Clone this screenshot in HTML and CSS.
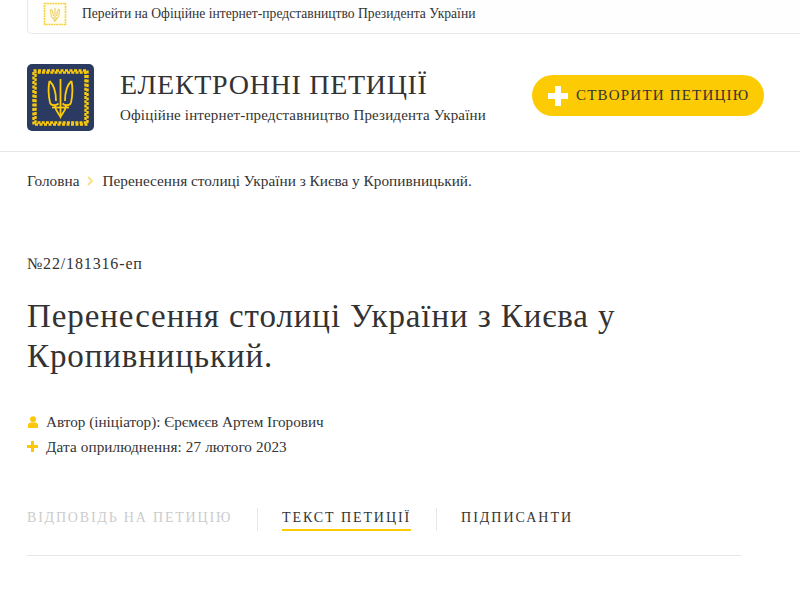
FILE: index.html
```html
<!DOCTYPE html>
<html lang="uk">
<head>
    <meta charset="UTF-8">
    <meta name="viewport" content="width=device-width, initial-scale=1.0">
    <title>Електронні петиції</title>
    <link rel="stylesheet" href="styles.css">
</head>
<body>
<div class="topbar">
    <svg class="topbar-logo" width="24" height="24" viewBox="0 0 24 24">
        <rect x="1.500" y="1.500" width="21" height="21" fill="#fffdf2" stroke="#f5d443" stroke-width="1.6" stroke-dasharray="2 0.6"/>
        <g fill="none" stroke="#ecca55" stroke-width="1">
            <path d="M12 6v13"/>
            <path d="M8 7c-.5 2.500 0 6 .5 8 .5 1.200 2 1 2.700.4"/>
            <path d="M16 7c.5 2.500 0 6-.5 8-.5 1.200-2 1-2.700.4"/>
            <path d="M8 7c1.500 1.500 2.300 4 2.300 7"/>
            <path d="M16 7c-1.500 1.500-2.300 4-2.300 7"/>
            <path d="M10 16c.2 1.500 1.300 2.300 2 3.500.7-1.200 1.800-2 2-3.500"/>
        </g>
    </svg>
    <a class="topbar-link">Перейти на Офіційне інтернет-представництво Президента України</a>
</div>

<header class="header">
    <svg class="logo" width="67" height="67" viewBox="0 0 67 67">
        <rect width="67" height="67" rx="5" fill="#2a3a61"/>
        <g fill="none" stroke="#fdcb0a" stroke-width="2.400">
            <rect x="6.500" y="6.500" width="54" height="54" stroke-dasharray="3 1.500"/>
            <rect x="8.500" y="8.500" width="50" height="50" stroke-dasharray="3 1.200" stroke-dashoffset="2"/>
        </g>
        <g fill="none" stroke="#fdcb0a" stroke-width="1.800">
            <path d="M33.500 15v37"/>
            <path d="M22.500 17c-1.500 7-.5 17 .5 21.500 1 3.500 6 3.500 8.500 1"/>
            <path d="M44.500 17c1.500 7 .5 17-.5 21.500-1 3.500-6 3.500-8.500 1"/>
            <path d="M22.500 17c4.500 4 6.500 11 6.500 20"/>
            <path d="M44.500 17c-4.500 4-6.500 11-6.500 20"/>
            <path d="M28 42c.5 5 4 7.500 5.500 11 1.500-3.500 5-6 5.500-11"/>
            <path d="M25 43.500h17"/>
        </g>
    </svg>
    <div class="header-text">
        <div class="site-title">ЕЛЕКТРОННІ ПЕТИЦІЇ</div>
        <div class="site-sub">Офіційне інтернет-представництво Президента України</div>
    </div>
    <a class="create-btn"><span class="plus plus-white"></span>СТВОРИТИ ПЕТИЦІЮ</a>
</header>

<nav class="crumbs">
    <a>Головна</a>
    <svg class="crumb-arrow" width="7" height="10" viewBox="0 0 7 10"><path d="M1 1l4 4-4 4" fill="none" stroke="#fbe08a" stroke-width="2"/></svg>
    <span>Перенесення столиці України з Києва у Кропивницький.</span>
</nav>

<main class="petition">
    <div class="number">№22/181316-еп</div>
    <h1 class="title">Перенесення столиці України з Києва у Кропивницький.</h1>
    <div class="meta">
        <div class="meta-row">
            <svg class="meta-icon" width="12" height="12" viewBox="0 0 12 12"><circle cx="6" cy="3.200" r="3" fill="#fdc70c"/><path d="M1 12V9.500Q1 6.500 4 6.500H8Q11 6.500 11 9.500V12Z" fill="#fdc70c"/></svg>
            <span>Автор (ініціатор): Єрємєєв Артем Ігорович</span>
        </div>
        <div class="meta-row">
            <span class="plus plus-small"></span>
            <span class="meta-date">Дата оприлюднення: 27 лютого 2023</span>
        </div>
    </div>
    <div class="tabs">
        <a class="tab tab-off"><span class="tab-label">ВІДПОВІДЬ НА ПЕТИЦІЮ</span></a>
        <a class="tab tab-on"><span class="tab-label">ТЕКСТ ПЕТИЦІЇ</span></a>
        <a class="tab tab-last"><span class="tab-label">ПІДПИСАНТИ</span></a>
    </div>
</main>
</body>
</html>
```

FILE: styles.css
```css
body {
    margin: 0;
    background: #fff;
    color: #333;
    font-family: "Liberation Serif", serif;
    overflow: hidden;
}
a {
    color: inherit;
    text-decoration: none;
}
.topbar {
    display: flex;
    align-items: center;
    height: 28px;
    margin-left: 27px;
    padding: 0 0 5px 15px;
    border: 1px solid #e8e8e8;
    border-width: 0 0 1px 1px;
    border-bottom-left-radius: 5px;
    background: #fefefe;
}
.topbar-link {
    margin-left: 15px;
    font-size: 13.6px;
}
.header {
    display: flex;
    align-items: flex-start;
    height: 87px;
    padding: 30px 36px 0 27px;
    border-bottom: 1px solid #e6e6e6;
}
.header-text {
    margin: 3px 0 0 26px;
    flex: 1;
}
.site-title {
    font-size: 28px;
    line-height: 36px;
    letter-spacing: 0.7px;
}
.site-sub {
    font-size: 15px;
    line-height: 24px;
    letter-spacing: 0.16px;
}
.create-btn {
    display: flex;
    align-items: center;
    width: 232px;
    height: 41px;
    margin-top: 11px;
    padding-left: 16px;
    box-sizing: border-box;
    border-radius: 21px;
    background: #fdcb04;
    font-size: 15px;
    letter-spacing: 1.2px;
}
.plus {
    display: inline-block;
    background:
        linear-gradient(currentColor, currentColor) center / 100% 30% no-repeat,
        linear-gradient(currentColor, currentColor) center / 30% 100% no-repeat;
}
.plus-white {
    width: 20px;
    height: 20px;
    margin-right: 8px;
    color: #fff;
}
.plus-small {
    width: 11px;
    height: 11px;
    color: #fdc70c;
}
.crumbs {
    display: flex;
    align-items: center;
    gap: 8px;
    padding: 20px 0 0 27px;
    font-size: 15.3px;
    line-height: 18px;
}
.petition {
    padding: 0 59px 0 27px;
}
.number {
    margin-top: 64px;
    font-size: 16px;
    line-height: 20px;
    letter-spacing: 0.85px;
}
.title {
    margin: 22px 0 0;
    font-size: 33px;
    line-height: 40px;
    font-weight: normal;
    letter-spacing: 0.9px;
}
.meta {
    margin-top: 33px;
    font-size: 15.2px;
}
.meta-row {
    display: flex;
    align-items: center;
    gap: 8px;
    height: 25px;
}
.meta-icon {
    margin-right: -1px;
}
.meta-date {
    letter-spacing: 0.12px;
}
.tabs {
    display: flex;
    align-items: flex-start;
    margin-top: 49px;
    padding-bottom: 24px;
    border-bottom: 1px solid #e6e6e6;
}
.tab {
    height: 23px;
    padding-right: 25px;
    border-right: 1px solid #e6e6e6;
    font-size: 14px;
    line-height: 20px;
    letter-spacing: 1.9px;
}
.tab + .tab {
    margin-left: 24px;
}
.tab-label {
    display: inline-block;
    height: 21px;
}
.tab-off {
    color: #ccc;
    letter-spacing: 1.8px;
}
.tab-on .tab-label {
    border-bottom: 2px solid #fdcb04;
}
.tab-last {
    border-right: 0;
    letter-spacing: 2px;
}
```
